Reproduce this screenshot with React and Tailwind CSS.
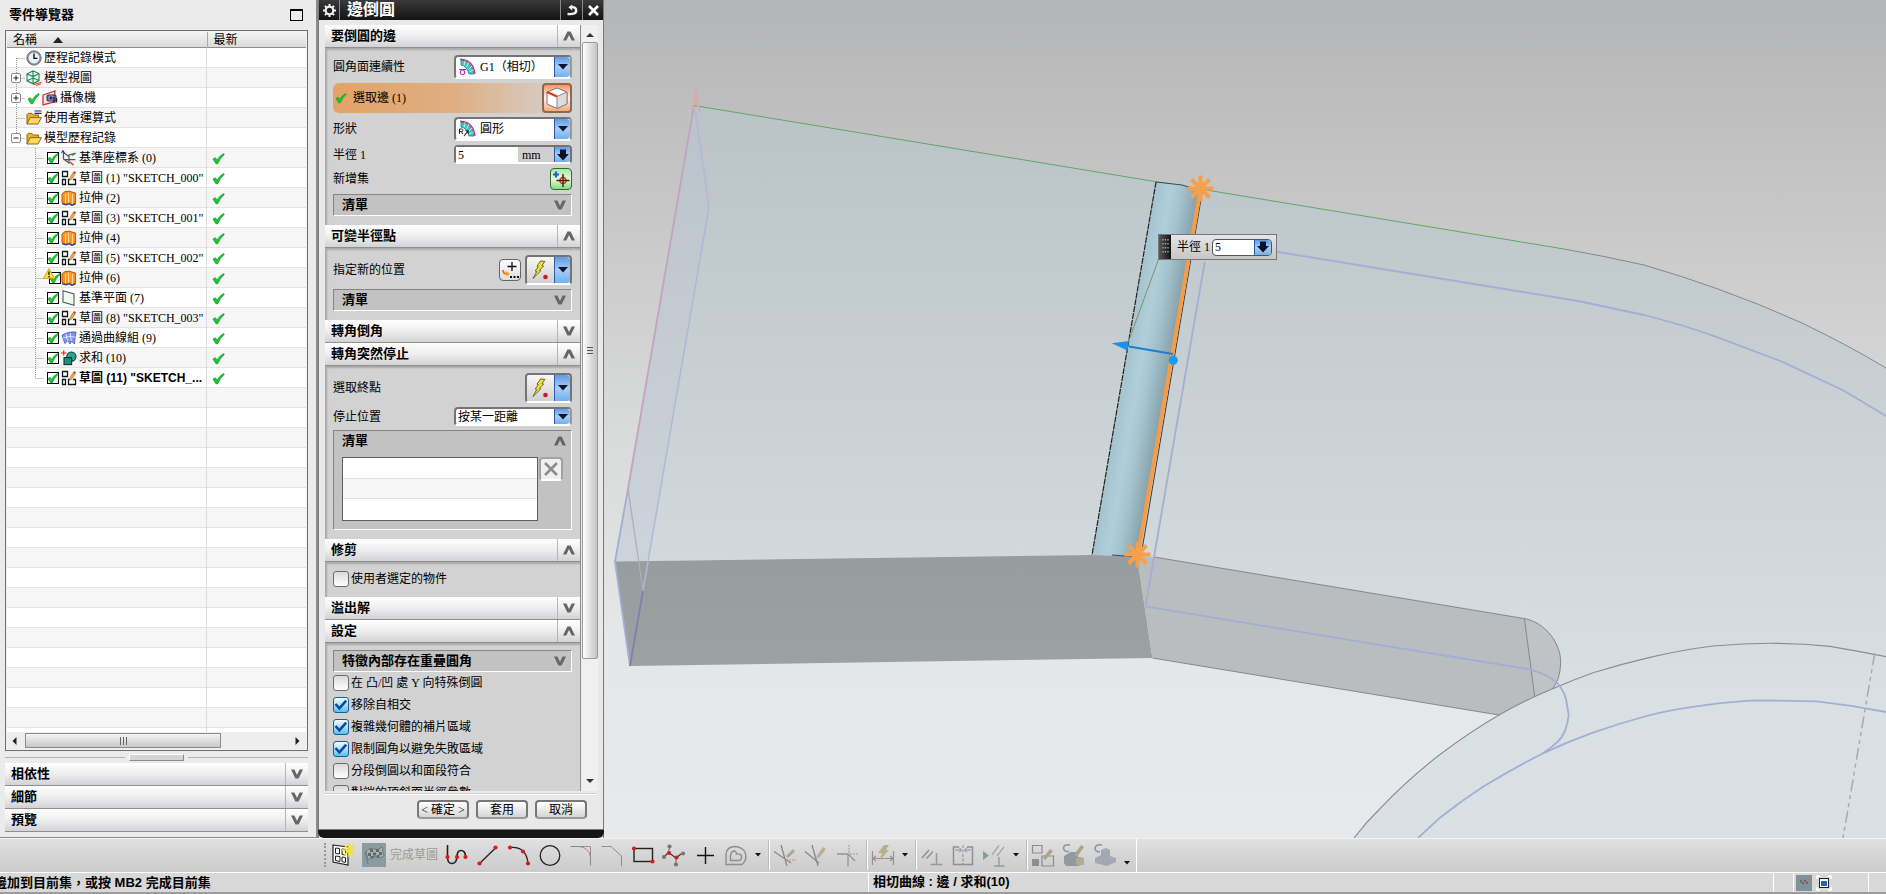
import React from "react";

const BLUE_BTN =
  "flex shrink-0 items-center justify-center self-stretch rounded-r-sm border-l border-[#2b5aa8] bg-linear-to-b from-[#5f9ae6] via-[#a9cdf6] to-[#6fb0ee]";

/* ---------- small glyphs ---------- */

function Tick({ size = 14 }) {
  return (
    <svg width={size} height={size} viewBox="0 0 14 14" className="shrink-0">
      <path d="M1 7.6 L3.6 6.2 L5.4 8.6 Q8 4 12.6 1.6 L13.2 2.6 Q8.6 6.6 6.2 12.6 L4.4 12.8 Z" fill="#1fc435" stroke="#0c9c22" strokeWidth=".7" />
    </svg>
  );
}

function Chevron({ up = false }) {
  return (
    <svg width="12" height="10" viewBox="0 0 12 10">
      <path d={up ? "M0 9.6 L4.4 0.4 H7.6 L12 9.6 H8.6 L6 4 L3.4 9.6 Z" : "M0 .4 L4.4 9.6 H7.6 L12 .4 H8.6 L6 6 L3.4 .4 Z"} fill="#666" />
    </svg>
  );
}

function DownTriangle() {
  return (
    <svg width="10" height="6" viewBox="0 0 10 6">
      <path d="M0 0 H10 L5 5.6 Z" fill="#0b1730" />
    </svg>
  );
}

function DownArrow() {
  return (
    <svg width="12" height="12" viewBox="0 0 12 12">
      <path d="M3 .5 H9 V5 H12 L6 11.6 L0 5 H3 Z" fill="#0b1424" />
    </svg>
  );
}

/* ---------- tree icons ---------- */

function ClockIcon() {
  return (
    <svg width="16" height="16" viewBox="0 0 16 16">
      <circle cx="8" cy="8" r="7.2" fill="#8d949c" stroke="#5d646c" strokeWidth=".8" />
      <circle cx="8" cy="8" r="5.4" fill="#e6f2fc" />
      <path d="M8 3.6 V8.4 H11.4" fill="none" stroke="#111" strokeWidth="1.4" />
    </svg>
  );
}

function ModelViewIcon() {
  return (
    <svg width="16" height="16" viewBox="0 0 16 16">
      <path d="M1 4 L7 .8 L13 3.6 V10.6 L7 13.8 L1 10.8 Z M1 4 L7 6.6 L13 3.6 M7 .8 V13.8 M1 10.8 L7 8 L13 10.6" fill="#e9f7f0" stroke="#1f8a50" strokeWidth="1.1" />
      <path d="M7.5 14.8 L15.5 12.2 M10 15.6 L15 13.8" stroke="#e03a1e" strokeWidth="1" />
    </svg>
  );
}

function CameraIcon() {
  return (
    <svg width="16" height="16" viewBox="0 0 16 16">
      <path d="M1 5 L13 1 L12 12 L1 15 Z" fill="#f3ecec" stroke="#d1322a" strokeWidth="1.3" />
      <rect x="5" y="5" width="9" height="6" rx="1" fill="#7173a8" stroke="#292a58" />
      <circle cx="9" cy="8" r="2.2" fill="#272a7a" stroke="#c8c8ea" strokeWidth=".7" />
      <path d="M12 7 V12 H14.6 V8" fill="none" stroke="#222" strokeWidth="1.2" />
    </svg>
  );
}

function FolderIcon({ lines = false }) {
  return (
    <svg width="16" height="16" viewBox="0 0 16 16">
      <path d="M1 14 V4.6 L2.2 3.4 H6 L7.4 5 H12.6 V8" fill="#e9b420" stroke="#7d5b0c" strokeWidth=".9" />
      <path d="M1 14 L4.2 7.6 H15.4 L12 14 Z" fill="#ffd95e" stroke="#7d5b0c" strokeWidth=".9" />
      {lines && <path d="M8.5 1 H15.5 M8.5 3.4 H15.5" stroke="#23277d" strokeWidth="1.2" />}
    </svg>
  );
}

function CsysIcon() {
  return (
    <svg width="16" height="16" viewBox="0 0 16 16">
      <path d="M2.5 2.5 V9 L8 13 V6.6 Z M8 12.6 V5 L14 3.4 M3 9.4 L14.4 9.6" fill="none" stroke="#555" strokeWidth="1.2" />
      <path d="M.5 3 L2 .6 L3.4 3" fill="none" stroke="#2a3bc0" strokeWidth="1.1" />
      <path d="M11 5.4 L14.8 3" stroke="#1d9a3c" strokeWidth="1.2" />
      <path d="M9 12 L12.6 15.2" stroke="#e03a1e" strokeWidth="1.4" />
    </svg>
  );
}

function SketchIcon() {
  return (
    <svg width="16" height="16" viewBox="0 0 16 16">
      <path d="M1.5 1.5 H6.5 V6.5 H1.5 Z M1.500 9.500 H4.500 V14.500 H1.500 Z M9 9.500 H7.500 V14.500 H14.500 V9.500 H12" fill="#fff" stroke="#161616" strokeWidth="1.3" />
      <path d="M8.6 8.6 L12.2 2.600 L14.2 3.800 L10.4 9.4 L8.2 10.2 Z" fill="#f0b04a" stroke="#8c5a18" strokeWidth=".6" />
      <path d="M12.2 2.600 L13 1 L15 2.200 L14.2 3.800 Z" fill="#c0392b" />
    </svg>
  );
}

function ExtrudeIcon() {
  return (
    <svg width="16" height="16" viewBox="0 0 16 16">
      <path d="M1 4 L4 1.6 L8 1.2 L14.6 3 V13 L11 14.6 L8 13 L5 14 L1 12.6 Z" fill="#f6921e" stroke="#bf5607" strokeWidth="1" />
      <path d="M4.6 3.4 V13.4 M7.6 2.6 V12.6 M11.4 4 V14" stroke="#ffd9a0" strokeWidth="1.1" />
      <path d="M1 13.6 L5 14.8 L8 13.8 L11 15.4 L14.8 13.8" fill="none" stroke="#27359a" strokeWidth="1.2" />
    </svg>
  );
}

function PlaneIcon() {
  return (
    <svg width="16" height="16" viewBox="0 0 16 16">
      <path d="M2 .8 L13 4 V15.200 L2 12 Z" fill="#f3faf4" stroke="#4c5c50" strokeWidth="1.1" />
    </svg>
  );
}

function MeshIcon() {
  return (
    <svg width="16" height="16" viewBox="0 0 16 16">
      <path d="M1 5 Q8 1 15 2 Q14 8 13.400 14 L10.600 11 L9 14 L6.6 10.6 L4 13.6 Q2 9 1 5 Z" fill="#7f95ec" stroke="#4456b8" strokeWidth=".8" />
      <path d="M5 4 Q5.6 8 7 11 M9.4 3 Q9 8 10.6 11 M1.8 8 Q8 5.6 14.4 7" fill="none" stroke="#e8edff" strokeWidth=".9" />
    </svg>
  );
}

function UniteIcon() {
  return (
    <svg width="16" height="16" viewBox="0 0 16 16">
      <path d="M0 3 H5.4 M2.7 .4 V5.6" stroke="#e2231a" strokeWidth="1.2" />
      <circle cx="10.4" cy="6.6" r="4.6" fill="#2ba58c" stroke="#0c3a32" strokeWidth="1.1" />
      <rect x="3" y="7.6" width="7.6" height="7" fill="#1f8f78" stroke="#0c3a32" strokeWidth="1.1" />
      <path d="M6.4 7.6 H10.6 V11" fill="none" stroke="#0c3a32" />
    </svg>
  );
}

/* ---------- part navigator ---------- */

function RootConnector({ first, last, expander }) {
  return (
    <svg width="18" height="20" viewBox="0 0 18 20" className="shrink-0">
      <path d={`M9.5 ${first ? 10 : 0} V${last ? 10 : 20} M9.5 10.5 H18`} stroke="#9a9a9a" strokeDasharray="1 1" fill="none" />
      {expander && (
        <g>
          <rect x="4.5" y="5.5" width="9" height="9" rx="1.5" fill="#fff" stroke="#8a8a8a" />
          <path d={expander === "+" ? "M6.5 10 H11.5 M9 7.5 V12.5" : "M6.5 10 H11.5"} stroke="#222" />
        </g>
      )}
    </svg>
  );
}

function ChildConnector({ last }) {
  return (
    <svg width="38" height="20" viewBox="0 0 38 20" className="shrink-0">
      <path d={`M28.5 0 V${last ? 10 : 20} M28.5 10.5 H37`} stroke="#9a9a9a" strokeDasharray="1 1" fill="none" />
    </svg>
  );
}

function TreeCheck({ label, warning }) {
  return (
    <span className={`relative flex h-3 w-3 shrink-0 ${warning ? "ml-1" : "ml-0.5"}`}>
      <input type="checkbox" defaultChecked aria-label={label} className="h-3 w-3 appearance-none border border-black bg-white outline-1 -outline-offset-1 outline-black" />
      <span className="pointer-events-none absolute inset-0">
        <Tick size={12} />
      </span>
      {warning && (
        <svg width="12" height="12" viewBox="0 0 12 12" className="absolute -top-1 -left-1.5">
          <path d="M6 .6 L11.6 10.4 H.4 Z" fill="#ffe02e" stroke="#c99b00" strokeWidth=".8" />
          <path d="M6 3.6 V7 M6 8 V9.4" stroke="#111" strokeWidth="1.3" />
        </svg>
      )}
    </span>
  );
}

const ROOTS = [
  { text: "歷程記錄模式", icon: <ClockIcon />, first: true },
  { text: "模型視圖", icon: <ModelViewIcon />, expander: "+" },
  { text: "攝像機", icon: <CameraIcon />, expander: "+", tick: true },
  { text: "使用者運算式", icon: <FolderIcon lines /> },
  { text: "模型歷程記錄", icon: <FolderIcon />, expander: "-", last: true },
];

const FEATURES = [
  { text: "基準座標系 (0)", icon: <CsysIcon /> },
  { text: '草圖 (1) "SKETCH_000"', icon: <SketchIcon /> },
  { text: "拉伸 (2)", icon: <ExtrudeIcon /> },
  { text: '草圖 (3) "SKETCH_001"', icon: <SketchIcon /> },
  { text: "拉伸 (4)", icon: <ExtrudeIcon /> },
  { text: '草圖 (5) "SKETCH_002"', icon: <SketchIcon /> },
  { text: "拉伸 (6)", icon: <ExtrudeIcon />, warning: true },
  { text: "基準平面 (7)", icon: <PlaneIcon /> },
  { text: '草圖 (8) "SKETCH_003"', icon: <SketchIcon /> },
  { text: "通過曲線組 (9)", icon: <MeshIcon /> },
  { text: "求和 (10)", icon: <UniteIcon /> },
  { text: '草圖 (11) "SKETCH_...', icon: <SketchIcon />, bold: true, last: true },
];

const BOLD_FACE = "font-['Liberation_Sans','Noto_Sans_CJK_TC',sans-serif] font-bold";
const BOLD = "font-['Liberation_Sans','Noto_Sans_CJK_TC',sans-serif] text-[13px] font-bold";

function PartNavigator() {
  return (
    <aside className="flex w-[318px] shrink-0 flex-col border-r-2 border-b border-[#8b8b8b] bg-[#ebebeb] pb-[5px] pl-[5px] pr-2">
      <header className="flex h-[30px] shrink-0 items-center justify-between px-1">
        <h1 className={BOLD}>零件導覽器</h1>
        <button type="button" aria-label="最大化" className="mr-px h-3 w-[13px] border border-t-2 border-black" />
      </header>

      <div className="flex min-h-0 flex-1 flex-col border border-[#6e6e6e] bg-[#f1f1f1] p-px">
        <div className="min-h-0 flex-1 overflow-hidden bg-[linear-gradient(to_right,transparent_199px,#dcdcdc_199px,#dcdcdc_200px,transparent_200px),linear-gradient(to_bottom,#fff_19px,#e2e2e2_19px,#e2e2e2_20px,#f6f6f6_20px,#f6f6f6_39px,#e2e2e2_39px)] bg-[length:100%_40px] bg-[position:0_16px]">
          <table className="w-full table-fixed border-collapse">
            <thead>
              <tr className="h-4 bg-linear-to-b from-[#f4f4f4] to-[#d9d9d9] text-left shadow-[inset_0_-1px_0_#8d8d8d]">
                <th className="w-[200px] border-r border-[#a9a9a9] p-0 pl-1.5 font-normal">
                  <div className="flex h-4 items-center gap-4">
                    名稱
                    <svg width="10" height="6" viewBox="0 0 10 6"><path d="M5 0 L10 6 H0 Z" fill="#222" /></svg>
                  </div>
                </th>
                <th className="p-0 pl-1.5 font-normal"><div className="flex h-4 items-center">最新</div></th>
              </tr>
            </thead>
            <tbody>
              {ROOTS.map((r) => (
                <tr key={r.text} className="h-5">
                  <td className="p-0">
                    <div className="flex h-5 items-center whitespace-nowrap">
                      <RootConnector first={r.first} last={r.last} expander={r.expander} />
                      {r.tick && <span className="ml-0.5 flex w-3.5"><Tick size={13} /></span>}
                      <span className="ml-px shrink-0">{r.icon}</span>
                      <span className="ml-0.5">{r.text}</span>
                    </div>
                  </td>
                  <td className="p-0" />
                </tr>
              ))}
              {FEATURES.map((f) => (
                <tr key={f.text} className="h-5">
                  <td className="p-0">
                    <div className="flex h-5 items-center whitespace-nowrap">
                      <ChildConnector last={f.last} />
                      <TreeCheck label={f.text} warning={f.warning} />
                      <span className={`shrink-0 ${f.warning ? "" : "ml-0.5"}`}>{f.icon}</span>
                      <span className={f.bold ? `ml-0.5 ${BOLD_FACE}` : "ml-0.5"}>{f.text}</span>
                    </div>
                  </td>
                  <td className="p-0 pl-[5px]"><Tick size={13} /></td>
                </tr>
              ))}
            </tbody>
          </table>
        </div>
        <div className="flex h-[17px] shrink-0 items-center bg-[#eeeeee]">
          <svg width="18" height="8" viewBox="0 0 18 8"><path d="M9.500 0 V8 L5.500 4 Z" fill="#222" /></svg>
          <div className="flex h-[15px] w-[196px] items-center justify-center gap-0.5 border border-[#8c8c8c] bg-linear-to-b from-[#f4f4f4] to-[#c9c9cb]">
            <i className="h-2 w-px bg-[#666]" /><i className="h-2 w-px bg-[#666]" /><i className="h-2 w-px bg-[#666]" />
          </div>
          <span className="flex-1" />
          <svg width="14" height="8" viewBox="0 0 14 8"><path d="M3.500 0 V8 L7.500 4 Z" fill="#222" /></svg>
        </div>
      </div>

      <div className="flex h-3 shrink-0 items-center">
        <span className="h-px flex-1 bg-[#b3b3b3]" />
        <span className="mx-1 h-[7px] w-[55px] border border-t-white border-l-white border-r-[#8c8c8c] border-b-[#8c8c8c] bg-[#d4d4d4]" />
        <span className="h-px flex-1 bg-[#b3b3b3]" />
      </div>

      {["相依性", "細節", "預覽"].map((t) => (
        <Header key={t} title={t} />
      ))}
    </aside>
  );
}

/* Collapsible caption bar shared by the navigator and the dialog */
function Header({ title, open = false }) {
  return (
    <button type="button" aria-expanded={open} className={`flex h-[23px] w-full shrink-0 items-stretch border-b border-[#8f8f8f] bg-linear-to-b from-white via-[#eeeeef] via-50% to-[#d3d3d6] text-left ${BOLD}`}>
      <span className="flex flex-1 items-center pl-1.5">{title}</span>
      <span className="flex w-[23px] items-center justify-center border-l border-[#b5b5b5]">
        <Chevron up={open} />
      </span>
    </button>
  );
}

/* ---------- edge blend dialog ---------- */

function Body({ children }) {
  return <div className="flex flex-col gap-1 bg-[#d2d2d2] px-2 pt-[7px] pb-[9px] shadow-[inset_2px_2px_2px_#a9a9a9]">{children}</div>;
}

function Row({ label, htmlFor, tall, children }) {
  return (
    <div className={`flex items-center justify-between ${tall}`}>
      <label htmlFor={htmlFor}>{label}</label>
      {children}
    </div>
  );
}

function Combo({ id, icon, value }) {
  return (
    <span className="flex w-[118px] items-center self-stretch rounded-sm border-2 border-[#747474] border-r-[#999] border-b-white bg-white">
      {icon && <span className="ml-0.5 shrink-0">{icon}</span>}
      <select id={id} className={`min-w-0 flex-1 appearance-none bg-transparent outline-none ${icon ? "pl-1" : "pl-0.5"}`}>
        <option>{value}</option>
      </select>
      <span className={`w-4 ${BLUE_BTN}`}><DownTriangle /></span>
    </span>
  );
}

function SubHeader({ title, open }) {
  return (
    <button type="button" className={`flex w-full items-center justify-between pl-2 pr-[5px] ${BOLD} ${open ? "h-5" : "h-[22px] border border-t-[#858585] border-l-[#858585] border-r-white border-b-white bg-[#c2c2c2]"}`}>
      {title}
      <Chevron up={open} />
    </button>
  );
}

function BlendIcon({ kind }) {
  return (
    <svg width="18" height="18" viewBox="0 0 18 18">
      <path d="M3 2 Q14 3 16 16 H11 Q9 8 3 7 Z" fill="#43c3c1" stroke="#177d86" strokeWidth=".8" />
      <path d="M2 1.2 Q15.400 2 17 16" fill="none" stroke="#c2286a" strokeWidth="1.3" />
      <path d="M7 2.600 L6 7.400 M10.800 4.400 L8.600 9 M14 8 L10.400 11.400 M15.400 12 L11 14" stroke="#dff" strokeWidth=".8" />
      {kind === "g1" ? (
        <path d="M1 11.500 H8 M4.500 12 A2.300 2.300 0 1 0 4.600 12 Z" fill="none" stroke="#b22bc0" strokeWidth="1.2" />
      ) : (
        <g>
          <path d="M1.500 14 V9 H3.600 A1.300 1.300 0 0 1 3.600 11.600 H1.500 M3.400 11.600 L5 14" fill="none" stroke="#222" strokeWidth="1" />
          <path d="M6 16 L10 11 M7.400 10.800 H10.200 V13.600" fill="none" stroke="#222" strokeWidth="1.1" />
        </g>
      )}
    </svg>
  );
}

function BoltPicker({ label }) {
  return (
    <span className="flex h-[30px] w-[47px] rounded-sm border-2 border-[#747474] border-b-white bg-linear-to-b from-[#f7f7f7] to-[#d0d0d0]">
      <button type="button" aria-label={label} className="flex flex-1 items-center justify-center">
        <svg width="20" height="22" viewBox="0 0 20 22">
          <path d="M9.500 2 L14 2.400 L10.800 6.600 L12.600 7 L8.400 11.400 L9.800 11.800 L2 19.500 L5.800 12.400 L4.200 12 L7.400 7.600 L6 7.200 Z" fill="#ece23a" stroke="#5c5a1e" strokeWidth=".9" />
          <circle cx="14.500" cy="18" r="2.300" fill="#d4142a" />
        </svg>
      </button>
      <button type="button" aria-label={`${label}選項`} className={`w-4 ${BLUE_BTN}`}><DownTriangle /></button>
    </span>
  );
}

function Check({ id, label, on }) {
  return (
    <div className="flex h-[22px] items-center gap-0.5">
      <span className="relative flex h-4 w-4">
        <input id={id} type="checkbox" defaultChecked={on} className={`h-4 w-4 appearance-none rounded-[3px] border ${on ? "border-[#1d5c96] bg-linear-to-b from-[#f2fbff] to-[#4fc0f5]" : "border-[#6d6d6d] bg-linear-to-b from-[#d9d9d9] to-white"}`} />
        {on && (
          <svg width="16" height="16" viewBox="0 0 16 16" className="pointer-events-none absolute inset-0">
            <path d="M2.500 7 L6.400 11.400 L13.200 3.600" fill="none" stroke="#114a9c" strokeWidth="2.600" />
          </svg>
        )}
      </span>
      <label htmlFor={id} className="whitespace-nowrap">{label}</label>
    </div>
  );
}

function EdgeBlendDialog() {
  return (
    <section aria-label="邊倒圓" className="flex w-[286px] shrink-0 flex-col border-x border-[#787878] bg-[#e9e9ea]">
      <header className="flex h-5 shrink-0 items-stretch bg-linear-to-b from-[#3a3a3a] to-[#141414] text-white">
        <button type="button" aria-label="選項" className="flex w-[21px] items-center justify-center border-r border-[#8a8a8a]">
          <svg width="13" height="13" viewBox="0 0 13 13">
            <path d="M6.500 0 V13 M0 6.500 H13 M1.900 1.900 L11.100 11.100 M11.100 1.900 L1.900 11.100" stroke="#f1f1f1" strokeWidth="2" />
            <circle cx="6.500" cy="6.500" r="4.800" fill="#f1f1f1" />
            <circle cx="6.500" cy="6.500" r="2.700" fill="#222" />
          </svg>
        </button>
        <h2 className="flex-1 pl-[7px] font-['Liberation_Sans','Noto_Sans_CJK_TC',sans-serif] text-base/5 font-bold">邊倒圓</h2>
        <button type="button" aria-label="重設" className="flex w-[22px] items-center justify-center border-l border-[#8a8a8a]">
          <svg width="12" height="12" viewBox="0 0 12 12">
            <path d="M1.500 10 Q10.400 10.800 10.200 6.200 Q9.800 2.800 5.600 3.200" fill="none" stroke="#f1f1f1" strokeWidth="2.400" />
            <path d="M6.200 .4 V6.400 L2.400 3.200 Z" fill="#f1f1f1" />
          </svg>
        </button>
        <button type="button" aria-label="關閉" className="flex w-[21px] items-center justify-center border-l border-[#8a8a8a]">
          <svg width="11" height="11" viewBox="0 0 11 11"><path d="M1 1 L10 10 M10 1 L1 10" stroke="#fff" strokeWidth="2.600" /></svg>
        </button>
      </header>

      <div className="flex min-h-0 flex-1 gap-px pt-[5px] pl-1.5 pr-[5px]">
        <div className="min-w-0 flex-1 overflow-hidden border-r border-[#8f8f8f]">
          <Header title="要倒圓的邊" open />
          <Body>
            <Row label="圓角面連續性" htmlFor="continuity" tall="h-6">
              <Combo id="continuity" icon={<BlendIcon kind="g1" />} value="G1（相切）" />
            </Row>
            <div className="flex h-[30px] items-center justify-between rounded-md bg-linear-to-r from-[#e2a367] via-[#dfae82] via-50% to-[#d2d2d2]">
              <span className="flex items-center gap-1.5 pl-0.5"><Tick size={12} />選取邊 (1)</span>
              <button type="button" aria-label="選取邊" className="flex h-[30px] w-[30px] items-center justify-center rounded border-2 border-[#8a6a50] bg-linear-to-b from-[#f8935a] via-[#fff3ea] to-[#f8a774]">
                <svg width="22" height="22" viewBox="0 0 22 22">
                  <path d="M1 5 L11 1 L21 5 V17 L11 21.400 L1 17 Z" fill="#fff" stroke="#777" />
                  <path d="M11 9.500 L21 5 V17 L11 21.400 Z" fill="#dcdcdc" stroke="#888" />
                  <path d="M1 5 L11 9.500" stroke="#e4331b" strokeWidth="2.400" />
                </svg>
              </button>
            </div>
            <Row label="形狀" htmlFor="shape" tall="h-6">
              <Combo id="shape" icon={<BlendIcon kind="r" />} value="圓形" />
            </Row>
            <Row label="半徑 1" htmlFor="radius" tall="h-[19px]">
              <span className="flex w-[118px] items-stretch self-stretch rounded-sm border-2 border-[#747474] border-b-white bg-[#cfcfcf]">
                <input id="radius" type="text" defaultValue="5" className="w-[62px] bg-white pl-0.5 outline-none" />
                <span className="flex flex-1 items-center pl-1">mm</span>
                <button type="button" aria-label="半徑選項" className={`w-4 ${BLUE_BTN}`}><DownArrow /></button>
              </span>
            </Row>
            <Row label="新增集" tall="h-[22px]">
              <button type="button" aria-label="新增集" className="flex h-[22px] w-[22px] items-center justify-center rounded border border-[#2f6a30] bg-linear-to-b from-[#a8e8a0] via-[#e6f8e0] to-[#86da7c]">
                <svg width="18" height="18" viewBox="0 0 18 18">
                  <path d="M1 4.500 H7 M4 1.500 V7.500" stroke="#1b5fd0" strokeWidth="2.200" />
                  <circle cx="11" cy="10.500" r="3" fill="none" stroke="#c8451e" strokeWidth="1.400" />
                  <path d="M11 4 V17 M4.500 10.500 H17.500" stroke="#4c1a0c" strokeWidth="1.400" />
                </svg>
              </button>
            </Row>
            <SubHeader title="清單" />
          </Body>

          <Header title="可變半徑點" open />
          <Body>
            <Row label="指定新的位置" tall="h-[30px]">
              <span className="flex items-center gap-1">
                <button type="button" aria-label="點建構函式" className="flex h-[22px] w-[22px] items-center justify-center rounded border border-[#666] bg-linear-to-b from-[#fff] to-[#dcdcdc]">
                  <svg width="18" height="18" viewBox="0 0 18 18">
                    <path d="M6.500 5.500 H15.500 M11 1 V10" stroke="#111" strokeWidth="1.300" />
                    <path d="M2 9 Q2 13 6 12.800" fill="none" stroke="#e8742a" strokeWidth="2" />
                    <path d="M5.400 10 L9 13 L5.400 15.600 Z" fill="#f0a030" />
                    <path d="M9 16 H11 M12.500 16 H14.500 M16 16 H18" stroke="#111" strokeWidth="2" />
                  </svg>
                </button>
                <BoltPicker label="指定新的位置" />
              </span>
            </Row>
            <SubHeader title="清單" />
          </Body>

          <Header title="轉角倒角" />
          <Header title="轉角突然停止" open />
          <Body>
            <Row label="選取終點" tall="h-[30px]"><BoltPicker label="選取終點" /></Row>
            <Row label="停止位置" htmlFor="stop" tall="h-[19px]"><Combo id="stop" value="按某一距離" /></Row>
            <div className="h-[100px] border border-t-[#858585] border-l-[#858585] border-r-white border-b-white bg-[#c2c2c2]">
              <SubHeader title="清單" open />
              <div className="flex items-start gap-px pt-1.5 pl-2">
                <div className="h-16 w-[196px] border border-[#5f5f5f] bg-[linear-gradient(to_bottom,#fff_20px,#e2e2e2_20px,#e2e2e2_21px,#f6f6f6_21px,#f6f6f6_40px,#e2e2e2_40px,#e2e2e2_41px,#fff_41px)]" />
                <button type="button" aria-label="移除" className="flex h-6 w-6 items-center justify-center rounded border-2 border-[#a2a2a2] border-b-white bg-[#f0f0f0]">
                  <svg width="14" height="14" viewBox="0 0 14 14"><path d="M1 1 L13 13 M13 1 L1 13" stroke="#8d8d8d" strokeWidth="2.600" /></svg>
                </button>
              </div>
            </div>
          </Body>

          <Header title="修剪" open />
          <Body>
            <div className="-mt-px -mb-0.5 flex flex-col"><Check id="userobj" label="使用者選定的物件" /></div>
          </Body>

          <Header title="溢出解" />
          <Header title="設定" open />
          <Body>
            <div className="flex flex-col">
              <SubHeader title="特徵內部存在重疊圓角" />
              <Check id="o1" label="在 凸/凹 處 Y 向特殊倒圓" />
              <Check id="o2" label="移除自相交" on />
              <Check id="o3" label="複雜幾何體的補片區域" on />
              <Check id="o4" label="限制圓角以避免失敗區域" on />
              <Check id="o5" label="分段倒圓以和面段符合" />
              <Check id="o6" label="對端的頂斜面半徑參數" />
            </div>
          </Body>
        </div>

        <div className="flex w-4 shrink-0 flex-col items-center bg-[#f0f0f1] py-1">
          <svg width="8" height="13" viewBox="0 0 8 13"><path d="M4 4 L8 8 H0 Z" fill="#333" /></svg>
          <div className="flex w-full flex-1 flex-col">
            <div className="flex w-full basis-[84%] flex-col items-center justify-center gap-0.5 rounded-xs border border-[#9a9a9a] bg-linear-to-r from-white to-[#c4c4c6]">
              <i className="h-px w-1.5 bg-[#555]" /><i className="h-px w-1.5 bg-[#555]" /><i className="h-px w-1.5 bg-[#555]" />
            </div>
          </div>
          <svg width="8" height="10" viewBox="0 0 8 10"><path d="M0 2 H8 L4 6 Z" fill="#333" /></svg>
        </div>
      </div>

      <footer className="flex shrink-0 flex-col pt-[3px]">
        <span className="mx-1.5 h-px bg-white shadow-[0_-1px_0_#cfcfcf]" />
        <div className="flex justify-end gap-[7px] pt-[5px] pr-4 pb-2.5">
          {["< 確定 >", "套用", "取消"].map((t) => (
            <button key={t} type="button" className="flex h-[19px] w-[52px] items-center justify-center rounded border-2 border-[#777] border-b-[#999] bg-linear-to-b from-white to-[#d5d5d5] whitespace-nowrap">
              {t}
            </button>
          ))}
        </div>
      </footer>
      <div className="-mx-px h-[9px] shrink-0 rounded-b-md border-t border-[#777] bg-[#161616]" />
    </section>
  );
}

/* ---------- graphics window ---------- */

function Burst({ x, y }) {
  return (
    <g transform={`translate(${x} ${y})`} stroke="#f7a04b" strokeWidth="4">
      <path d="M0 -13 V13 M-13 0 H13 M-9 -9 L9 9 M9 -9 L-9 9" />
    </g>
  );
}

function Model() {
  return (
    <svg viewBox="604 0 1282 838" preserveAspectRatio="xMinYMin slice" className="block h-full w-full" role="img" aria-label="模型">
      <defs>
        <linearGradient id="sky" gradientUnits="userSpaceOnUse" x1="0" y1="0" x2="0" y2="838">
          <stop offset="0" stopColor="#b4b5b6" />
          <stop offset=".25" stopColor="#c7c7c8" />
          <stop offset=".5" stopColor="#d8d9d9" />
          <stop offset=".75" stopColor="#e4e6e7" />
          <stop offset="1" stopColor="#e7e9eb" />
        </linearGradient>
        <linearGradient id="face" gradientUnits="userSpaceOnUse" x1="0" y1="100" x2="0" y2="838">
          <stop offset="0" stopColor="#b9c3c8" />
          <stop offset=".3" stopColor="#c5cdd0" />
          <stop offset=".6" stopColor="#d0d8dc" />
          <stop offset=".8" stopColor="#d9e0e3" />
          <stop offset="1" stopColor="#d9e1e4" />
        </linearGradient>
        <linearGradient id="strip" gradientUnits="userSpaceOnUse" x1="1127" y1="350" x2="1172" y2="357.700">
          <stop offset="0" stopColor="#a5c3ce" />
          <stop offset=".35" stopColor="#aecfda" />
          <stop offset=".6" stopColor="#a3c2cd" />
          <stop offset="1" stopColor="#869fa9" />
        </linearGradient>
        <linearGradient id="side" gradientUnits="userSpaceOnUse" x1="0" y1="555" x2="0" y2="668">
          <stop offset="0" stopColor="#979c9e" />
          <stop offset="1" stopColor="#9ca1a2" />
        </linearGradient>
      </defs>
      <rect x="604" width="1282" height="838" fill="url(#sky)" />

      {/* top face of the body */}
      <path d="M694 105.500 L1564 249 Q1604 256 1644 265 Q1682 276 1718 289 Q1760 304 1801 322.600 Q1846 344 1886 368 V838 H1354 L1380 808.700 Q1430 760 1499 715 L1153 557 L1092 555 L615 561.500 L628 489 Z" fill="url(#face)" />
      <path d="M694 105.500 L709 207 L643 590.600 L615 561.500 L628 489 Z" fill="#c0c2d2" opacity=".25" />

      {/* side walls */}
      <path d="M615 561.500 L1092 555 L1137 556 L1152.400 658 L630 666 Z" fill="url(#side)" />
      <path d="M1137 556 L1154 557 L1524.400 618.600 C1544 622 1561 642 1560.700 663 Q1560 680 1552.700 688.700 Q1525 701 1499 715 L1152.400 658 Z" fill="#babdbf" />
      <path d="M1524.400 618.600 C1544 622 1561 642 1560.700 663 Q1560 680 1552.700 688.700 L1534.700 696.700 Z" fill="#bfc3c5" />
      <path d="M1154 557 L1524.400 618.600 C1544 622 1561 642 1560.700 663 Q1560 680 1552.700 688.700 M1524.400 618.600 L1534.700 696.700 M1152.400 658 L1499 715" fill="none" stroke="#84888c" />

      {/* outer edges */}
      <path d="M1354 838 Q1366 822 1380 808.700 Q1408 779 1441.700 753.300 Q1470 732 1499 715 Q1525 700 1552.700 688.700 Q1573 680 1593 672.700 Q1621 664 1650 657.300 Q1681 650 1713 646 Q1745 643 1776.700 643.300 Q1804 643.500 1830 646.300 Q1858 651 1886 656.700" fill="none" stroke="#8a8d90" strokeWidth="1.200" />
      <path d="M1564 249 Q1604 256 1644 265 Q1682 276 1718 289 Q1760 304 1801 322.600 Q1846 344 1886 368" fill="none" stroke="#85888b" />
      <path d="M694 105.500 L1564 249" stroke="#62a562" />
      <path d="M1874.700 653.300 L1843 838" stroke="#a6abab" strokeWidth="1.500" strokeDasharray="12 4 4 4 4 4" />

      {/* sketch curves */}
      <g fill="none" stroke="#a3aed2" strokeWidth="1.800">
        <path d="M1204.700 262 L1145.500 606.500 L1380 645 L1531.700 669.700 L1545 674.700 Q1553 679 1558 684 Q1564 691 1566 699.300 L1568.700 715 Q1568 723 1565 730.700 Q1562 738 1556.700 742.700 Q1550 749 1541.700 754" />
        <path d="M1272 251 L1578 301 L1644 315 Q1680 324 1713 335.600 L1782 361.600 L1844 390.700 L1886 416" />
        <path d="M1418 838 L1440 817.700 Q1461 801 1483 786.700 Q1512 769 1541.700 754 Q1567 742 1593 732.700 Q1620 723 1646.700 716 Q1674 709 1701.700 705.700 Q1731 701 1761.700 700.300 L1816.700 701.300 Q1851 705 1886 712" />
        <path d="M628 489 L615 561.500 L630 666" />
        <path d="M695 110 L709 207 L643 590.600" stroke="#b1b8d6" strokeWidth="1.500" />
        <path d="M643 590.600 L630 666" stroke="#7b82ab" />
        <path d="M628 489 L643 590.600" stroke="#b0aebc" strokeWidth="1.300" />
        <path d="M694 105.500 L628 489" stroke="#c5a2bd" />
        <path d="M698 106 L711 200" stroke="#cbbcc8" strokeWidth="1.300" />
      </g>
      <path d="M692 110 L696 85 L700 112 L696 100 Z" fill="#d6aab0" stroke="#d6aab0" strokeWidth=".8" />

      {/* blend preview */}
      <path d="M1156 182 L1182 185 Q1192 190 1200.600 189 L1137 556 L1092 555 Z" fill="url(#strip)" />
      <path d="M1156 182 L1092 555" stroke="#222" strokeWidth="1.200" strokeDasharray="6 1" />
      <path d="M1156 182 L1182 185 L1196 189 M1112 555 L1137 557" fill="none" stroke="#3a4a50" />
      <path d="M1202.500 190 L1141 556" stroke="#333a44" />
      <path d="M1200 192 L1138.500 552" stroke="#f59c48" strokeWidth="4" />
      <Burst x={1200.500} y={188.500} />
      <Burst x={1137.500} y={554.500} />

      {/* radius handle */}
      <path d="M1159 258 L1129 340" stroke="#8c8d63" />
      <path d="M1129 346.500 L1173 354" stroke="#1a7fd0" strokeWidth="2" />
      <path d="M1111.700 343.300 L1129 341 L1127.500 350.500 Z" fill="#1494ec" />
      <circle cx="1173.300" cy="360.300" r="4.500" fill="#149bf3" />
    </svg>
  );
}

function RadiusCallout() {
  return (
    <div className="absolute top-[234px] left-[554px] flex h-[26px] w-[119px] items-center border border-[#777] bg-linear-to-b from-[#e6e6e6] to-[#c6c6c6]">
      <span className="flex h-full w-3 items-center justify-center bg-linear-to-r from-[#5a5a5a] to-[#111]">
        <svg width="7" height="16" viewBox="0 0 7 16">
          <path d="M1 0 V16 M3.500 0 V16 M6 0 V16" stroke="#aaa" strokeWidth="1.300" strokeDasharray="1.500 2.500" />
        </svg>
      </span>
      <label htmlFor="callout" className="flex-1 pl-1.5 whitespace-nowrap">半徑 1</label>
      <span className="mr-1 flex h-[17px] w-[60px] items-stretch rounded border border-[#555] bg-white">
        <input id="callout" type="text" defaultValue="5" className="w-0 min-w-0 flex-1 bg-transparent pl-0.5 outline-none" />
        <button type="button" aria-label="選項" className={`w-[17px] ${BLUE_BTN}`}><DownArrow /></button>
      </span>
    </div>
  );
}

/* ---------- sketch toolbar ---------- */

function Tool({ label, children }) {
  return (
    <button type="button" aria-label={label} className="flex h-6 w-6 shrink-0 items-center justify-center">
      <svg width="24" height="24" viewBox="0 0 24 24" fill="none">{children}</svg>
    </button>
  );
}

const Dot = ({ x, y, c = "#d81a1a", r = 2.1 }) => <circle cx={x} cy={y} r={r} fill={c} />;
const Sep = () => <span className="-mr-1 h-[30px] w-0.5 shrink-0 border-l border-[#bdbdbd] bg-white" />;
const Caret = () => (
  <button type="button" aria-label="更多" className="shrink-0">
    <svg width="6" height="4" viewBox="0 0 6 4"><path d="M0 0 H6 L3 3.500 Z" fill="#111" /></svg>
  </button>
);

function Flag() {
  return (
    <svg width="24" height="24" viewBox="0 0 24 24">
      <rect width="24" height="24" fill="#8b9ba1" />
      <path d="M3 8 L6 21 M4 8 Q8 4 12 6 T20 4 L22 13 Q18 16 14 14 T6 17 Z" fill="#a8b0b3" stroke="#6f7a7e" />
      <path d="M8 6 h3 v3 h-3 Z M14 6 h3 v3 h-3 Z M11 9.500 h3 v3 h-3 Z M17 9 h3 v3 h-3 Z M6 10 h3 v3 h-3 Z M8.500 13 h3 v2.500 h-3 Z M14.500 12 h3 v2.500 h-3 Z" fill="#5f686c" />
    </svg>
  );
}

function Toolbar() {
  return (
    <div role="toolbar" className="flex h-[34px] shrink-0 items-stretch border-t border-[#f3f3f3] bg-linear-to-b from-[#e0e0e0] to-[#cbcbcb] pl-80">
      <div className="flex w-[817px] shrink-0 items-center gap-[7px] border-r border-white pb-0.5 pl-1">
        <span className="h-6 w-0 border-l-2 border-dotted border-[#9a9a9a]" />
        <div className="-ml-0.5 flex items-center gap-[7px]">
          <Tool label="草圖">
            <path d="M2 2 L17 4 V22 L2 19 Z" fill="#fff" stroke="#222" strokeWidth="1.200" />
            <path d="M4.500 5 L8.500 5.500 V11 L4.500 10.400 Z M11 6 L14.500 6.400 V12 L11 11.400 Z M4.500 13 L9 13.600 V18.500 L4.500 17.500 Z M11 14 L14.500 14.600 V19.400 L11 18.700 Z" stroke="#222" />
            <path d="M18 0 V14 M11 7 H24 M13.500 2 L22.500 12 M22.500 2 L13.500 12" stroke="#f2e41c" strokeWidth="1.700" />
          </Tool>
          <button type="button" className="flex items-center gap-1 whitespace-nowrap text-[#9a9a9a]"><Flag />完成草圖</button>
          <Tool label="輪廓">
            <path d="M2.500 2 V14 Q2.500 21 7.500 20.500 Q11.500 20 12 14 Q12 7.500 16 7.500 Q20.500 7.500 20.500 14" stroke="#222" strokeWidth="1.600" />
            <Dot x={2.500} y={14} /><Dot x={12} y={14} /><Dot x={20.500} y={14} />
          </Tool>
          <Tool label="直線"><path d="M4 20 L20 4.500" stroke="#222" strokeWidth="1.300" /><Dot x={3.500} y={20.500} /><Dot x={19.500} y={4.500} /></Tool>
          <Tool label="圓弧"><path d="M3 4.500 Q19 3 21 20" stroke="#222" strokeWidth="1.300" /><Dot x={3} y={4.500} /><Dot x={16} y={8.500} /><Dot x={21} y={20.500} /></Tool>
          <Tool label="圓"><circle cx="12" cy="12.500" r="9.800" stroke="#222" strokeWidth="1.300" /></Tool>
          <Tool label="圓角"><path d="M1.500 3.500 H15 M21.500 9 V22.500" stroke="#888" /><path d="M10 3.500 Q20 4.500 21.500 14 M15 3.500 H21.500 V9" stroke="#b08a8a" /></Tool>
          <Tool label="倒斜角"><path d="M1.500 3.500 H11 L21.500 13 V23" stroke="#9c8888" /></Tool>
          <Tool label="矩形"><rect x="3" y="5.500" width="18.500" height="13" stroke="#222" strokeWidth="1.400" /><Dot x={3} y={5.500} /><Dot x={21.500} y={18.500} /></Tool>
          <Tool label="樣條"><path d="M2 14 L6.500 9.500 L14 15 L19 11" stroke="#333" strokeWidth="1.200" /><path d="M7.500 4 L6.500 9.500 M14 15 V21" stroke="#666" /><Dot x={7.500} y={3.500} c="#777" /><Dot x={2} y={14} c="#777" /><Dot x={21} y={10.500} c="#777" /><Dot x={14} y={21.500} c="#777" /><Dot x={7} y={10} /><Dot x={14.500} y={14.500} /></Tool>
          <Tool label="點"><path d="M12.500 4 V21 M4 12.500 H21" stroke="#111" strokeWidth="1.400" /></Tool>
          <Tool label="偏置曲線"><path d="M2 21.500 V12 Q2.500 3.500 11 3.500 Q18 4 21 9 Q23.500 17 18 21.500 Z" stroke="#8f8f8f" strokeWidth="1.400" /><path d="M6.500 17.500 V12.500 Q7 8 11 8 Q12.500 9 12.500 11 Q17 10.500 17.500 13 Q18 16 16 17.500 Z" stroke="#8f8f8f" strokeWidth="1.400" /></Tool>
        </div>
        <Caret />
        <Sep />
        <Tool label="快速修剪"><path d="M1 8.500 L18 20 M8 2 L14 23" stroke="#8c8888" strokeWidth="1.300" /><path d="M13 17 H23" stroke="#b09090" strokeDasharray="2 1" /><path d="M13 13 L20 6 L22 8.500 L15 15 Z" fill="#a9a996" /></Tool>
        <Tool label="快速延伸"><path d="M1 8.500 L15 20 M8 2 L14 23" stroke="#8c8888" strokeWidth="1.300" /><path d="M12 14 L19 4 L22 6 L14.500 15.500 Z" fill="#b4b09a" /></Tool>
        <Tool label="製作拐角"><path d="M2 11 H13 L20 18 M13 11 V23" stroke="#a08e8e" strokeWidth="1.300" /><path d="M14 2 V10 M15 11 H23" stroke="#999" strokeDasharray="2 1" /></Tool>
        <Sep />
        <Tool label="自動判斷尺寸"><path d="M1.500 8 V22 M22.500 8 V22 M2 15.500 H22 M5 13 L2 15.500 L5 18 M19 13 L22 15.500 L19 18" stroke="#a08c8c" strokeWidth="1.200" /><path d="M13 2 H18 L15 7 H18 L8 18 L11 10 H7 Z" fill="#b5b091" /></Tool>
        <Caret />
        <Sep />
        <Tool label="約束"><path d="M2 15 L9 7 M6.500 15.500 L13 8.500" stroke="#9a8888" strokeWidth="1.300" /><path d="M16.500 10 V21.500 M10.500 21.500 H22.500" stroke="#999" strokeWidth="1.500" /></Tool>
        <Tool label="設為對稱"><path d="M8 4 H2.500 V21.500 H21.500 V4 H16" stroke="#8f8f96" strokeWidth="1.500" /><path d="M12 2 V21" stroke="#8f8f96" strokeDasharray="3 1.500" /><path d="M4.500 7 H10 M14 7 H20 M8 4.500 L10.500 7 L8 9.500 M16 4.500 L13.500 7 L16 9.500" stroke="#8b8b92" /></Tool>
        <Tool label="顯示約束"><path d="M1 8 L7 12.500 L1 17 Z" fill="#7fa186" /><path d="M10 12 L17 2.500 M15 13 L22 4" stroke="#999" strokeWidth="1.200" /><path d="M17 14 V23 M12 23 H22.500" stroke="#999" strokeWidth="1.300" /></Tool>
        <Caret />
        <Sep />
        <Tool label="轉換參考"><path d="M1.500 2.500 H11 V10 H1.500 Z M11 13 H22.500 V23 H11 Z" stroke="#8d8d8d" strokeWidth="1.200" /><rect x="1" y="16" width="7" height="7" fill="#8d8d8d" /><path d="M12 15 L19 6 L22 8 L14.500 17 Z" fill="#aaa587" /></Tool>
        <Tool label="備選解"><path d="M8 2 Q2 1 1.500 5 Q2 9 7 8.500" stroke="#8d939c" strokeWidth="1.600" /><path d="M2 13 L9 9 H16 V14 L22 15 V21 L16 23 H4 L2 20 Z" fill="#9298a3" /><path d="M12 12 L19 2 L22 4 L15 14 Z" fill="#aaa587" /><path d="M14 15 h8 v7 h-8 Z" fill="#b1ad8c" /></Tool>
        <Tool label="推斷約束"><path d="M9 2 Q3 1 2 5 Q2 9 7 9" stroke="#8d939c" strokeWidth="1.600" /><path d="M2 15 L8 12 V7 L13 5 L17 7 V13 L23 15 V19 L14 23 L2 20 Z" fill="#a2a8b4" /></Tool>
        <span className="mt-3"><Caret /></span>
      </div>
    </div>
  );
}

function StatusBar() {
  return (
    <footer className={`flex h-[22px] shrink-0 items-center overflow-hidden border-t border-b-2 border-t-white border-b-[#9c9c9c] bg-[#d8d8d8] whitespace-nowrap ${BOLD}`}>
      <p className="w-[868px] shrink-0 -indent-1.5">邊加到目前集，或按 MB2 完成目前集</p>
      <p className="flex-1 self-stretch border-l border-white pl-1">相切曲線 : 邊 / 求和(10)</p>
      <span className="w-5 self-stretch border-l border-white" />
      <span className="flex w-[75px] items-center gap-1 self-stretch border-l border-white pl-0.5">
        <svg width="16" height="16" viewBox="0 0 24 24"><rect width="24" height="24" fill="#7f939c" /><path d="M4 6 L20 4 L18 15 L8 18 Z" fill="#8f8d90" /><path d="M6 8 h3 v3 h-3 Z M12 7 h3 v3 h-3 Z M9 11 h3 v3 h-3 Z M15 10 h3 v3 h-3 Z" fill="#5f6266" /></svg>
        <svg width="16" height="16" viewBox="0 0 16 16"><path d="M1 4 V1 H4 M12 1 H15 V4 M15 12 V15 H12 M4 15 H1 V12" stroke="#fff" strokeWidth="1.500" fill="none" /><rect x="3.500" y="3.500" width="9" height="9" fill="#fff" stroke="#222" /><rect x="5" y="6" width="6" height="5" fill="#2a62b8" /></svg>
      </span>
      <span className="w-[18px] self-stretch border-l border-white" />
    </footer>
  );
}

export default function App() {
  return (
    <div className="flex h-screen flex-col overflow-hidden bg-[#d8d8d8] font-['Liberation_Serif','Noto_Sans_CJK_TC',serif] text-xs text-black">
      <div className="flex min-h-0 flex-1">
        <PartNavigator />
        <EdgeBlendDialog />
        <main className="relative min-w-0 flex-1 overflow-hidden">
          <Model />
          <RadiusCallout />
        </main>
      </div>
      <Toolbar />
      <StatusBar />
    </div>
  );
}
